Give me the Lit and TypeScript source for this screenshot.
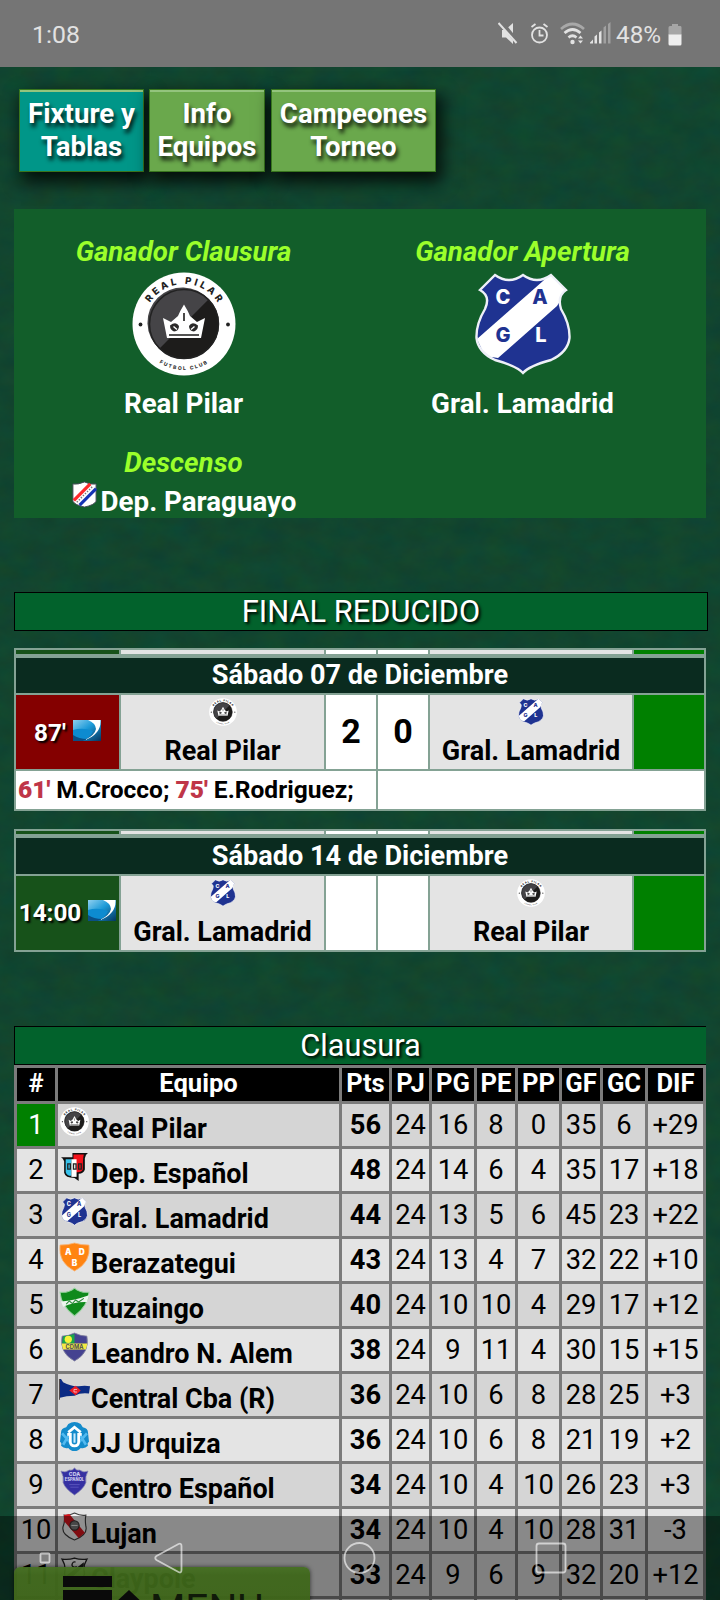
import { LitElement, html, css, svg, nothing } from "lit";
import { customElement, property } from "lit/decorators.js";

const pilar = svg`
  <circle cx="52" cy="52" r="51.5" fill="#fff"/>
  <circle cx="52" cy="52" r="35" fill="#1d1c1b"/>
  <path d="M27.3 76.7A35 35 0 1 1 76.7 27.3Z" fill="#454447"/>
  <circle cx="52" cy="52" r="34.5" fill="none" stroke="#222" stroke-width="1.5"/>
  <path d="M31 46L39 50L46 44Q48 39 52 32.500Q56 39 58 44L65 50L73 46L69 66H35Z" fill="#fff"/>
  <path d="M38 53.500Q44 49 47 54Q47 59 42 59.500Q38 58 38 53.500ZM66 53.500Q60 49 57 54Q57 59 62 59.500Q66 58 66 53.500Z" fill="#2b2a2a"/>
  <path d="M41.500 54.500L45 57.500M62.500 54.500L59 57.500" stroke="#fff" stroke-width="1.400"/>
  <path d="M52 41V49M37 63H67" stroke="#1d1c1b" stroke-width="1.600"/>
  <circle cx="8.500" cy="52.500" r="1.900" fill="#222"/><circle cx="96" cy="52.500" r="1.900" fill="#222"/>
  <defs><path id="top" d="M12 52A40 40 0 0 1 92 52"/><path id="bot" d="M6 52A46 46 0 0 0 98 52"/></defs>
  <text font-family="Inter, sans-serif" font-size="9.500" font-weight="800" fill="#222" letter-spacing="2.900"><textPath href="#top" startOffset="51%" text-anchor="middle">REAL PILAR</textPath></text>
  <text font-family="Inter, sans-serif" font-size="5" font-weight="800" fill="#333" letter-spacing="1.600"><textPath href="#bot" startOffset="50%" text-anchor="middle">FUTBOL CLUB</textPath></text>`;

const lamadrid = svg`
  <clipPath id="lam"><path d="M24 3Q38 13 52 3Q66 13 80 3L95 18Q86 24 90 37Q99 52 98.500 66Q97 80 80 88Q58 94 52 101Q46 94 24 88Q7 80 5.500 66Q5 52 14 37Q20 24 9 18Z"/></clipPath>
  <g clip-path="url(#lam)"><path d="M0 0H104V104H0Z" fill="#1f3391"/>
  <path d="M6 67L72 9L80 1L96 18L86 34L27 86L14 84Z" fill="#fff"/></g>
  <path d="M24 3Q38 13 52 3Q66 13 80 3L95 18Q86 24 90 37Q99 52 98.500 66Q97 80 80 88Q58 94 52 101Q46 94 24 88Q7 80 5.500 66Q5 52 14 37Q20 24 9 18Z" fill="none" stroke="#eef0f8" stroke-width="2.400"/>
  <g font-family="Inter, sans-serif" font-size="20" font-weight="800" text-anchor="middle"><text x="32" y="32" fill="#fff">C</text><text x="69" y="32" fill="#1f3391">A</text><text x="32" y="70" fill="#1f3391">G</text><text x="70" y="70" fill="#fff">L</text></g>`;

const small: Record<string, unknown> = {
  paraguayo: svg`<path d="M2 3Q7 4 14 1Q20 4 26 3V21Q24 25 14 27Q4 25 2 21Z" fill="#fff" stroke="#464a58" stroke-width="1"/>
    <path d="M3 20L20 3" stroke="#ff2a2c" stroke-width="3.400"/><path d="M9 25L26 8" stroke="#1533b4" stroke-width="3.200"/><path d="M6 22L22 6" stroke="#777" stroke-width="1.500" stroke-dasharray="1.500 1.500"/>`,
  espanol: svg`<path d="M1 5H12V1H27Q24 3 24 6V17Q23 21 18 21V28L14 25Q5 25 4 20V9Q3 6 1 5Z" fill="#111"/>
    <path d="M13 2.500H23Q22 6 22 17Q21 19.500 17 19.500H13Z" fill="#f4121b"/><path d="M5.500 7H11V23Q6 23 5.500 19Z" fill="#38c3ec"/><path d="M11 7H16V24H11Z" fill="#fff"/>
    <path d="M7.500 11.500h2.500v5h-2.500zM13 11.500h2.500v5h-2.500zM18 11.500h2.500v5h-2.500z" fill="none" stroke="#222" stroke-width="1.300"/>`,
  berazategui: svg`<path d="M0 3Q8 3 14 1Q20 3 28 3Q30 20 14 28Q-2 20 0 3Z" fill="#ff8412" stroke="#f8b477" stroke-width=".8"/>
    <g fill="#fff" font-family="Inter, sans-serif" font-weight="900" font-size="8" text-anchor="middle"><text x="8" y="13">A</text><text x="21" y="13">D</text><text x="14" y="23">B</text></g>`,
  ituzaingo: svg`<path d="M0 5Q8 6 14 1Q20 6 28 5Q27 18 14 28Q1 18 0 5Z" fill="#0f8a1c" stroke="#9fd4a6" stroke-width="1"/>
    <path d="M3 19L1 14Q14 13 28 8L26 14.500Q14 14 3 19Z" fill="#eef5ee"/><path d="M6 16.500L9 13.500L12 16L15 12.500L18 14.500L23 11" fill="none" stroke="#2a8a38" stroke-width="1"/>`,
  alem: svg`<path d="M2 4Q8 4 14 1Q20 4 26 4Q29 20 14 28Q-1 20 2 4Z" fill="#454290" stroke="#82829e" stroke-width=".8"/>
    <path d="M3 4Q8 4 14 2V11H2Z" fill="#1aa64b"/><circle cx="8" cy="7" r="3.500" fill="#f6f23a"/><path d="M1.500 11H26.500L25 17H3Z" fill="#f4ea43"/>
    <text x="14" y="16" font-size="5.500" font-family="Inter, sans-serif" font-weight="700" fill="#4a4a55" text-anchor="middle">CDMA</text>`,
  central: svg`<path d="M-1 1L1 1L3 4Q10 8 18 8Q24 7 29 8L28 15Q20 14 14 17Q6 17 0 19Z" fill="#0b2b84" transform="translate(0 1)"/><path d="M-.500 2V22" stroke="#524b4b"/>
    <path d="M9 13L15 8.500L20 13L15 17.500Z" fill="#ee1c25"/><path d="M16.500 12h-3v2.500h3" fill="none" stroke="#fff" stroke-width=".6"/>`,
  urquiza: svg`<path d="M8 2Q14-2 20 2L22 5Q27 6 27 10L28 19Q26 20 27 23Q24 26 20 25Q18 28 14 28Q10 28 8 25Q4 26 1 23Q2 20 0 19L1 10Q1 6 6 5Z" fill="#148bcb"/>
    <path d="M2 11L10 20M3 22L9 12M26 11L18 20M25 22L19 12" stroke="#53baf0" stroke-width="2.500"/>
    <path d="M8 10L14 5L20 10M7 12H10V19Q10 23 14 23Q18 23 18 19V12H21" fill="none" stroke="#fff" stroke-width="2.600"/><path d="M14 11V20" fill="none" stroke="#c7ebff" stroke-width="2"/>`,
  centro: svg`<path d="M1 4Q5 6 9 3Q12 4 14 1Q16 4 19 3Q23 6 27 4Q24 9 25 15Q23 21 14 27Q5 21 3 15Q4 9 1 4Z" fill="#3530a2" stroke="#7b7aae" stroke-width=".7"/>
    <g fill="#cfcff0" font-family="Inter, sans-serif" font-weight="800" text-anchor="middle"><text x="14" y="8.500" font-size="5">CDA</text><text x="14" y="13.500" font-size="4">ESPAÑOL</text></g><path d="M9 17H19M10 19.500H18" stroke="#5f5ac0" stroke-width=".8"/>`,
  lujan: svg`<path d="M4 3Q8 4 14 1Q20 4 25 3Q24 8 25 14Q27 22 14 27Q1 22 3 14Q5 9 4 3Z" fill="#f0f0f0" stroke="#3d3d3d" stroke-width="1.100"/>
    <path d="M4 3L9 2L24 20L18 25L4 9Z" fill="#d8141d"/><circle cx="14" cy="13" r="4.500" fill="#777" stroke="#333" stroke-width="1"/><path d="M11 13H17" stroke="#ddd" stroke-width="1"/>`,
  claypole: svg`<path d="M2 2Q8 3 14 1Q20 3 26 2Q23 7 23 12Q26 20 14 28Q2 20 5 12Q5 7 2 2Z" fill="#eee" stroke="#222" stroke-width="1.300"/>
    <path d="M6 18L23 5V9L9 22Z" fill="#222"/><path d="M15 5a2.500 2.500 0 1 0 1 4" fill="none" stroke="#222" stroke-width="1.200"/>`,
};

@customElement("team-crest")
class TeamCrest extends LitElement {
  @property() team = "";
  static styles = css`
    :host { display: block; }
    svg { display: block; width: 100%; height: 100%; overflow: visible; }
  `;
  render() {
    const big = this.team === "pilar" ? pilar : this.team === "lamadrid" ? lamadrid : null;
    return html`<svg viewBox=${big ? "0 0 104 104" : "0 0 28 28"}>${big ?? small[this.team] ?? nothing}</svg>`;
  }
}

interface Match { date: string; time: string; live: boolean; home: string; away: string; hc: string; ac: string; hs: string; as: string; }
const matches: Match[] = [
  { date: "Sábado 07 de Diciembre", time: "87'", live: true, home: "Real Pilar", away: "Gral. Lamadrid", hc: "pilar", ac: "lamadrid", hs: "2", as: "0" },
  { date: "Sábado 14 de Diciembre", time: "14:00", live: false, home: "Gral. Lamadrid", away: "Real Pilar", hc: "lamadrid", ac: "pilar", hs: "", as: "" },
];

const rows: [string, string, ...(number | string)[]][] = [
  ["pilar", "Real Pilar", 56, 24, 16, 8, 0, 35, 6, "+29"],
  ["espanol", "Dep. Español", 48, 24, 14, 6, 4, 35, 17, "+18"],
  ["lamadrid", "Gral. Lamadrid", 44, 24, 13, 5, 6, 45, 23, "+22"],
  ["berazategui", "Berazategui", 43, 24, 13, 4, 7, 32, 22, "+10"],
  ["ituzaingo", "Ituzaingo", 40, 24, 10, 10, 4, 29, 17, "+12"],
  ["alem", "Leandro N. Alem", 38, 24, 9, 11, 4, 30, 15, "+15"],
  ["central", "Central Cba (R)", 36, 24, 10, 6, 8, 28, 25, "+3"],
  ["urquiza", "JJ Urquiza", 36, 24, 10, 6, 8, 21, 19, "+2"],
  ["centro", "Centro Español", 34, 24, 10, 4, 10, 26, 23, "+3"],
  ["lujan", "Lujan", 34, 24, 10, 4, 10, 28, 31, "-3"],
  ["claypole", "Claypole", 33, 24, 9, 6, 9, 32, 20, "+12"],
  ["", "", "", "", "", "", "", "", "", ""],
];

@customElement("app-root")
class AppRoot extends LitElement {
  static styles = css`
    :host { display: block; position: relative; width: 720px; height: 1600px; overflow: hidden; background: #11452f; font-family: Roboto, "Liberation Sans", sans-serif; color: #fff; }
    * { box-sizing: border-box; }
    .turf { position: absolute; inset: 0; width: 720px; height: 1600px; }
    .page { position: relative; display: flex; flex-direction: column; }
    .status { height: 67px; background: #757575; display: flex; align-items: center; justify-content: space-between; padding: 1px 38px 0 32px; font-size: 24.800px; color: #e2e2e2; }
    .status svg { display: block; }
    .icons { display: flex; align-items: center; font-size: 24.300px; }
    .pct { width: 43px; margin-left: 4px; margin-right: 9px; white-space: nowrap; }
    .tabs { display: flex; gap: 6px; padding: 22px 19px 0; height: 142px; }
    .tab { height: 83px; background: #6aa84c; border: 1px solid #38761d; padding-bottom: 1px; display: flex; align-items: center; justify-content: center; text-align: center; font-weight: 700; font-size: 27.600px; line-height: 33px; white-space: nowrap; text-shadow: 2px 4px 4px rgba(0,0,0,.85); box-shadow: 4px 8px 16px 2px rgba(0,0,0,.8), inset 0 2px 0 #93c47d; }
    .t1 { width: 125px; background: #009688; margin-right: -1px; } .t2 { width: 116px; } .t3 { width: 165px; }
    .panel { margin-left: 14px; width: 692px; height: 309px; background: #125e2a; display: grid; grid-template-columns: 339px 339px; grid-template-rows: 227px 82px; font-size: 27.700px; font-weight: 700; }
    .winner { display: flex; flex-direction: column; align-items: center; padding-top: 27px; line-height: 32px; }
    .win-title { color: #9bff2b; font-style: italic; }
    .crest-lg { width: 104px; height: 104px; margin: 4px 0 12px; }
    .relegated { display: flex; flex-direction: column; align-items: center; padding-top: 11px; line-height: 32px; }
    .rel-team { display: flex; height: 39px; gap: 3px; align-items: flex-start; }
    .rel-team team-crest { width: 27px; height: 27px; margin-top: 2px; }
    .rel-team span { margin-top: 7px; }
    .title { margin-left: 14px; width: 694px; height: 39px; background: #02622c; border: 1px solid #000; text-align: center; font-size: 30.800px; line-height: 37px; text-shadow: 2px 2px 3px #000; }
    .title.one { margin-top: 74px; }
    .title.two { margin-top: 74px; width: 692px; border-right: 0; }
    .match { margin-left: 14px; width: 692px; background: #84a294; padding: 2px; margin-top: 17px; display: grid; grid-template-columns: 103px 203px 50px 50px 202px 70px; gap: 2px; }
    .match.live { grid-template-rows: 4px 37px 74px 38px; }
    .match.next { margin-top: 18px; grid-template-rows: 3px 38px 74px; }
    .date { grid-column: 1 / -1; margin-top: 2px; background: #0a2b1f; text-align: center; font-weight: 700; font-size: 27.100px; line-height: 34px; }
    .next .date { line-height: 36px; }
    .c-time { background: #17521a; display: flex; align-items: center; justify-content: center; gap: 7px; font-size: 24.300px; font-weight: 700; text-shadow: 2px 2px 2px #000; }
    .c-time svg { margin-bottom: 4px; flex: none; }
    .next .when { padding-bottom: 2px; }
    .live .when { background: #840000; }
    .c-team { background: #e4e4e4; } .c-score { background: #fff; } .c-end { background: #008000; }
    .side { display: flex; flex-direction: column; align-items: center; color: #000; font-size: 27px; font-weight: 700; line-height: 32px; padding-top: 3px; }
    .side team-crest { width: 28px; height: 28px; margin-bottom: 9px; }
    .score { display: flex; align-items: center; justify-content: center; color: #000; font-size: 34px; font-weight: 700; padding-bottom: 2px; }
    .goals { background: #fff; color: #000; font-size: 24.550px; font-weight: 700; line-height: 37px; padding-left: 2px; white-space: nowrap; }
    .goals.h { grid-column: 1 / 4; } .goals.a { grid-column: 4 / -1; }
    .goals b { color: #bf3648; }
    .standings { margin-left: 14px; width: 692px; background: #7b7b7b; padding: 3px; display: grid; grid-template-columns: 38px 281px 47px 37px 42px 38px 41px 38px 42px 55px; gap: 3px; grid-template-rows: 33px; grid-auto-rows: 42px; text-align: center; color: #000; font-size: 27.300px; }
    .th { background: #000; color: #fff; font-weight: 700; font-size: 25.600px; line-height: 31px; }
    .td { background: #e4e4e4; line-height: 42px; white-space: nowrap; }
    .odd { background: #d5d5d5; }
    .first { background: #008000; color: #fff; }
    .pts { font-weight: 700; }
    .name { display: flex; font-weight: 700; font-size: 26.950px; line-height: 50px; padding-left: 2px; gap: 2px; }
    .name team-crest { width: 29px; height: 29px; margin-top: 3px; }
    .menu { position: absolute; left: 14px; top: 1567px; width: 296px; height: 60px; border-radius: 6px; background: linear-gradient(rgba(116,186,56,.95), rgba(104,172,44,.95) 8px, rgba(103,166,40,.95)); box-shadow: 0 0 4px rgba(0,0,0,.6); display: flex; padding: 9px 0 0 49px; font-size: 40.500px; line-height: 50px; overflow: hidden; }
    .menu svg { flex: none; margin-right: 6px; } .menu span { padding-top: 8px; color: #1c2c10; }
    .nav { position: absolute; left: 0; top: 1516px; width: 720px; height: 84px; background: rgba(0,0,0,.4); }
  `;

  private turf() {
    return html`<svg class="turf"><filter id="grass" x="0" y="0" width="100%" height="100%" color-interpolation-filters="sRGB">
      <feTurbulence type="fractalNoise" baseFrequency="0.035 0.05" numOctaves="4" seed="4"/>
      <feColorMatrix values="0.05 0 0 0 0.043  0 0.05 0 0 0.246  -0.04 0 0.04 0 0.184  0 0 0 0 1"/></filter>
      <rect width="720" height="1600" filter="url(#grass)"/></svg>`;
  }

  private tv() {
    return html`<svg width="28" height="21" viewBox="0 0 28 21"><defs><linearGradient id="sky" x1="0" y1="0" x2="1" y2="1"><stop offset="0" stop-color="#8fd0f0"/><stop offset=".45" stop-color="#1c9ad8"/><stop offset="1" stop-color="#04355f"/></linearGradient></defs>
      <path d="M0 0H28V21H0Z" fill="url(#sky)"/><path d="M0 10Q10 7 20 11Q18 17 10 21H0Z" fill="#0d8bd0"/><path d="M0 15Q6 19 14 19L10 21H0Z" fill="#0a4f86"/>
      <path d="M15 0H27.500Q28.500 14 12 20Q22 15 23 9Q22.500 3 15 0Z" fill="#fff"/></svg>`;
  }

  private strip() {
    return ["time", "team", "score", "score", "team", "end"].map(c => html`<div class="c-${c}"></div>`);
  }

  private match(m: Match) {
    return html`<section class="match ${m.live ? "live" : "next"}">
      ${this.strip()}
      <div class="date">${m.date}</div>
      <div class="c-time when"><span>${m.time}</span>${this.tv()}</div>
      <div class="c-team side"><team-crest team=${m.hc}></team-crest>${m.home}</div>
      <div class="c-score score">${m.hs}</div><div class="c-score score">${m.as}</div>
      <div class="c-team side"><team-crest team=${m.ac}></team-crest>${m.away}</div>
      <div class="c-end"></div>
      ${m.live ? html`<div class="goals h"><b>61'</b> M.Crocco; <b>75'</b> E.Rodriguez;</div><div class="goals a"></div>` : nothing}
    </section>`;
  }

  render() {
    return html`${this.turf()}
    <div class="page">
      <header class="status"><span>1:08</span>
        <div class="icons">
          <svg width="114" height="28" viewBox="0 0 114 28" fill="#e2e2e2">
            <path d="M4 10H7L15 3V24L8 17.500H4Z"/><path d="M3 2L20 23" stroke="#757575" stroke-width="4.500"/><path d="M.500 3L18.500 23" stroke="#e2e2e2" stroke-width="2"/>
            <g fill="none" stroke="#e2e2e2" stroke-width="1.800"><circle cx="41.500" cy="15" r="7.500"/><path d="M41.500 10V15.500H45.500M33.500 7L37.500 4M49.500 7L45.500 4"/></g>
            <g fill="none" stroke-width="2.700"><path d="M63 9Q74.500-1 86 9" stroke="#a8a8a8"/><path d="M66.500 13Q74.500 6 82.500 13M70.500 17.500Q74.500 14 78.500 17.500" stroke="#e2e2e2"/></g>
            <circle cx="74.500" cy="22" r="2.200"/><path d="M80 18.500l2.500-3 2.500 3zM80 20.500h5l-2.500 3z"/>
            <path d="M92 23.500v-1l3-3v4zM96.500 23.500v-7l2.500-2v9zM101 23.500v-11l2.500-2v13z"/><path d="M105.500 23.500v-16l2.500-2v18zM110 23.500V4l2.500-2v21.500z" fill="#a0a0a0"/>
          </svg>
          <span class="pct">48%</span>
          <svg width="14" height="23"><path d="M4 1H10V3H12.500Q13.500 3 13.500 4.500V12H.500V4.500Q.500 3 2 3H4Z" fill="#a6a6a6"/><path d="M.500 11.500h13V21q0 1.500-1.500 1.500H2Q.500 22.500.500 21Z" fill="#eee"/></svg>
        </div>
      </header>
      <nav class="tabs"><div class="tab t1">Fixture y<br>Tablas</div><div class="tab t2">Info<br>Equipos</div><div class="tab t3">Campeones<br>Torneo</div></nav>
      <section class="panel">
        <div class="winner"><div class="win-title">Ganador Clausura</div><team-crest class="crest-lg" team="pilar"></team-crest><div>Real Pilar</div></div>
        <div class="winner"><div class="win-title">Ganador Apertura</div><team-crest class="crest-lg" team="lamadrid"></team-crest><div>Gral. Lamadrid</div></div>
        <div class="relegated"><div class="win-title">Descenso</div><div class="rel-team"><team-crest team="paraguayo"></team-crest><span>Dep. Paraguayo</span></div></div>
      </section>
      <div class="title one">FINAL REDUCIDO</div>
      ${matches.map(m => this.match(m))}
      <div class="title two">Clausura</div>
      <section class="standings">
        ${["#", "Equipo", "Pts", "PJ", "PG", "PE", "PP", "GF", "GC", "DIF"].map(h => html`<div class="th">${h}</div>`)}
        ${rows.map(([crest, name, ...nums], i) => {
          const shade = i % 2 ? "" : "odd";
          return html`<div class="td ${i ? shade : "first"}">${name ? i + 1 : ""}</div>
            <div class="td name ${shade}"><team-crest team=${crest}></team-crest>${name}</div>
            ${nums.map((n, k) => html`<div class="td ${shade} ${k ? "" : "pts"}">${n}</div>`)}`;
        })}
      </section>
    </div>
    <div class="menu"><svg width="81" height="60"><path d="M0 0H49V11H0ZM0 14H49V25H0Z" fill="#111"/><path d="M66 14L82 29V45H52V27Z" fill="#111"/></svg><span>MENU</span></div>
    <div class="nav"><svg width="720" height="84" fill="none" stroke="#fff" stroke-opacity=".62" stroke-width="1.800">
      <rect x="40.500" y="37.500" width="9" height="9" rx="1"/>
      <path d="M156.500 40L178.500 28Q181.500 26.800 181.500 30V54Q181.500 57.500 178.500 56L156.500 44Q154 42 156.500 40Z"/>
      <circle cx="359.500" cy="42" r="15"/><rect x="536.500" y="27.500" width="29" height="29" rx="2.500"/></svg></div>`;
  }
}
